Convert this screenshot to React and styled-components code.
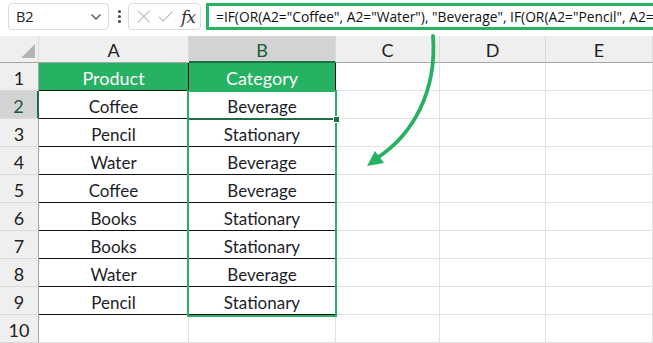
import React from "react"
import styled, { createGlobalStyle } from "styled-components"

const Global = createGlobalStyle`
  body {
    margin: 0;
    background: #ffffff;
    overflow: hidden;
  }
`

const GREEN = "#27b163"
const DARK_GREEN = "#1e7145"

const Page = styled.div`
  position: relative;
  width: 653px;
  height: 343px;
  overflow: hidden;
  font-family: "Lato", "Liberation Sans", sans-serif;
`

const Toolbar = styled.div`
  display: flex;
  align-items: center;
  height: 36px;
  padding: 0 0 3px 8px;
  box-sizing: border-box;
  font-family: "Open Sans", "Noto Sans", sans-serif;
`

const NameBox = styled.div`
  display: flex;
  align-items: center;
  justify-content: space-between;
  width: 101px;
  height: 27px;
  box-sizing: border-box;
  border: 1px solid #dcdcdc;
  border-radius: 4px;
  padding: 0 6px 0 7px;
  font-size: 14.5px;
  color: #222;
`

const Dots = styled.div`
  display: flex;
  flex-direction: column;
  gap: 2px;
  margin: 0 7px 0 9px;
  span {
    width: 3px;
    height: 3px;
    border-radius: 50%;
    background: #444;
  }
`

const FxBox = styled.div`
  display: flex;
  align-items: center;
  gap: 7px;
  width: 73px;
  height: 27px;
  box-sizing: border-box;
  border: 1px solid #dcdcdc;
  border-radius: 4px;
  padding: 0 5px 0 8px;
`

const Fx = styled.span`
  font-family: "DejaVu Serif", "Liberation Serif", serif;
  font-style: italic;
  font-size: 17px;
  color: #333;
  margin-left: 1px;
  letter-spacing: -1px;
`

const Formula = styled.div`
  flex: 1;
  margin-left: 5px;
  height: 27px;
  box-sizing: border-box;
  border: 3px solid ${GREEN};
  border-right: none;
  padding-left: 7px;
  display: flex;
  align-items: center;
  white-space: nowrap;
  overflow: hidden;
  font-size: 13.8px;
  color: #111;
`

const Sheet = styled.div`
  position: relative;
  display: grid;
  grid-template-columns: 39px 150px 147px 104px 106px 107px;
  grid-template-rows: 27px repeat(10, 28px);
`

const Corner = styled.div`
  background: #efefef;
  border-right: 1px solid #dadada;
  border-bottom: 1px solid #a6a6a6;
  box-sizing: border-box;
  display: flex;
  align-items: flex-end;
  justify-content: flex-end;
  padding: 0 3px 4px 0;
`

const ColHead = styled.div`
  display: flex;
  align-items: center;
  justify-content: center;
  box-sizing: border-box;
  background: ${(p) => (p.$active ? "#d3d3d3" : "#efefef")};
  border-right: 1px solid #dadada;
  border-bottom: ${(p) => (p.$active ? `2px solid ${DARK_GREEN}` : "1px solid #a6a6a6")};
  color: ${(p) => (p.$active ? "#185c37" : "#222")};
  font-size: 18px;
  padding-top: 2px;
`

const RowHead = styled.div`
  display: flex;
  align-items: center;
  justify-content: center;
  box-sizing: border-box;
  background: ${(p) => (p.$active ? "#d3d3d3" : "#efefef")};
  border-bottom: 1px solid #dadada;
  border-right: ${(p) => (p.$active ? `2px solid ${DARK_GREEN}` : "1px solid #a6a6a6")};
  color: ${(p) => (p.$active ? "#185c37" : "#222")};
  font-size: 18px;
  padding-top: 3px;
`

const Cell = styled.div`
  display: flex;
  align-items: center;
  justify-content: center;
  box-sizing: border-box;
  font-size: ${(p) => (p.$head ? "18px" : "17px")};
  color: ${(p) => (p.$head ? "#ffffff" : "#1d1d28")};
  background: ${(p) => (p.$head ? GREEN : "#ffffff")};
  border-right: 1px solid ${(p) => (p.$data ? "#111" : "#e1e1e1")};
  border-bottom: 1px solid ${(p) => (p.$data ? "#111" : "#e1e1e1")};
  padding-top: 3px;
`

const Selection = styled.div`
  position: absolute;
  left: 187px;
  top: 90px;
  width: 150px;
  height: 227px;
  box-sizing: border-box;
  border: 2.5px solid ${GREEN};
  pointer-events: none;
`

const ActiveLine = styled.div`
  position: absolute;
  left: 189px;
  top: 118px;
  width: 146px;
  height: 2px;
  background: ${DARK_GREEN};
`

const Handle = styled.div`
  position: absolute;
  left: 333px;
  top: 116px;
  width: 5px;
  height: 5px;
  background: ${DARK_GREEN};
  border: 1px solid #fff;
`

const Arrow = styled.svg`
  position: absolute;
  left: 0;
  top: 0;
  pointer-events: none;
`

const rows = [
  ["Coffee", "Beverage"],
  ["Pencil", "Stationary"],
  ["Water", "Beverage"],
  ["Coffee", "Beverage"],
  ["Books", "Stationary"],
  ["Books", "Stationary"],
  ["Water", "Beverage"],
  ["Pencil", "Stationary"],
]

const cols = ["A", "B", "C", "D", "E"]

const Chevron = () => (
  <svg width="12" height="8" viewBox="0 0 12 8">
    <path d="M1.5 1.5 L6 6 L10.5 1.5" fill="none" stroke="#555" strokeWidth="1.4" />
  </svg>
)

const Cross = () => (
  <svg width="15" height="15" viewBox="0 0 15 15">
    <path d="M1 1 L14 14 M14 1 L1 14" stroke="#bdbdbd" strokeWidth="1.3" />
  </svg>
)

const Check = () => (
  <svg width="17" height="13" viewBox="0 0 17 13">
    <path d="M1 7 L5.5 11.5 L16 1" fill="none" stroke="#bdbdbd" strokeWidth="1.3" />
  </svg>
)

export default function App() {
  return (
    <Page>
      <Global />
      <Toolbar>
        <NameBox>
          B2
          <Chevron />
        </NameBox>
        <Dots>
          <span />
          <span />
          <span />
        </Dots>
        <FxBox>
          <Cross />
          <Check />
          <Fx>fx</Fx>
        </FxBox>
        <Formula>
          =IF(OR(A2="Coffee", A2="Water"), "Beverage", IF(OR(A2="Pencil", A2="Books"), "Stationary", "Other"))
        </Formula>
      </Toolbar>

      <Sheet>
        <Corner>
          <svg width="14" height="14" viewBox="0 0 14 14">
            <polygon points="14,0 14,14 0,14" fill="#b4b4b4" />
          </svg>
        </Corner>
        {cols.map((c) => (
          <ColHead key={c} $active={c === "B"}>
            {c}
          </ColHead>
        ))}

        <RowHead>1</RowHead>
        <Cell $head $data>Product</Cell>
        <Cell $head $data>Category</Cell>
        <Cell />
        <Cell />
        <Cell />

        {rows.map(([a, b], i) => (
          <React.Fragment key={i}>
            <RowHead $active={i === 0}>{i + 2}</RowHead>
            <Cell $data>{a}</Cell>
            <Cell $data>{b}</Cell>
            <Cell />
            <Cell />
            <Cell />
          </React.Fragment>
        ))}

        <RowHead>10</RowHead>
        <Cell />
        <Cell />
        <Cell />
        <Cell />
        <Cell />
      </Sheet>

      <Selection />
      <ActiveLine />
      <Handle />

      <Arrow width="653" height="343" viewBox="0 0 653 343">
        <path
          d="M433 36 C437 90 414 134 377 158"
          fill="none"
          stroke={GREEN}
          strokeWidth="3.8"
          strokeLinecap="round"
        />
        <polygon points="367,166 375,151 384,163" fill={GREEN} />
      </Arrow>
    </Page>
  )
}
